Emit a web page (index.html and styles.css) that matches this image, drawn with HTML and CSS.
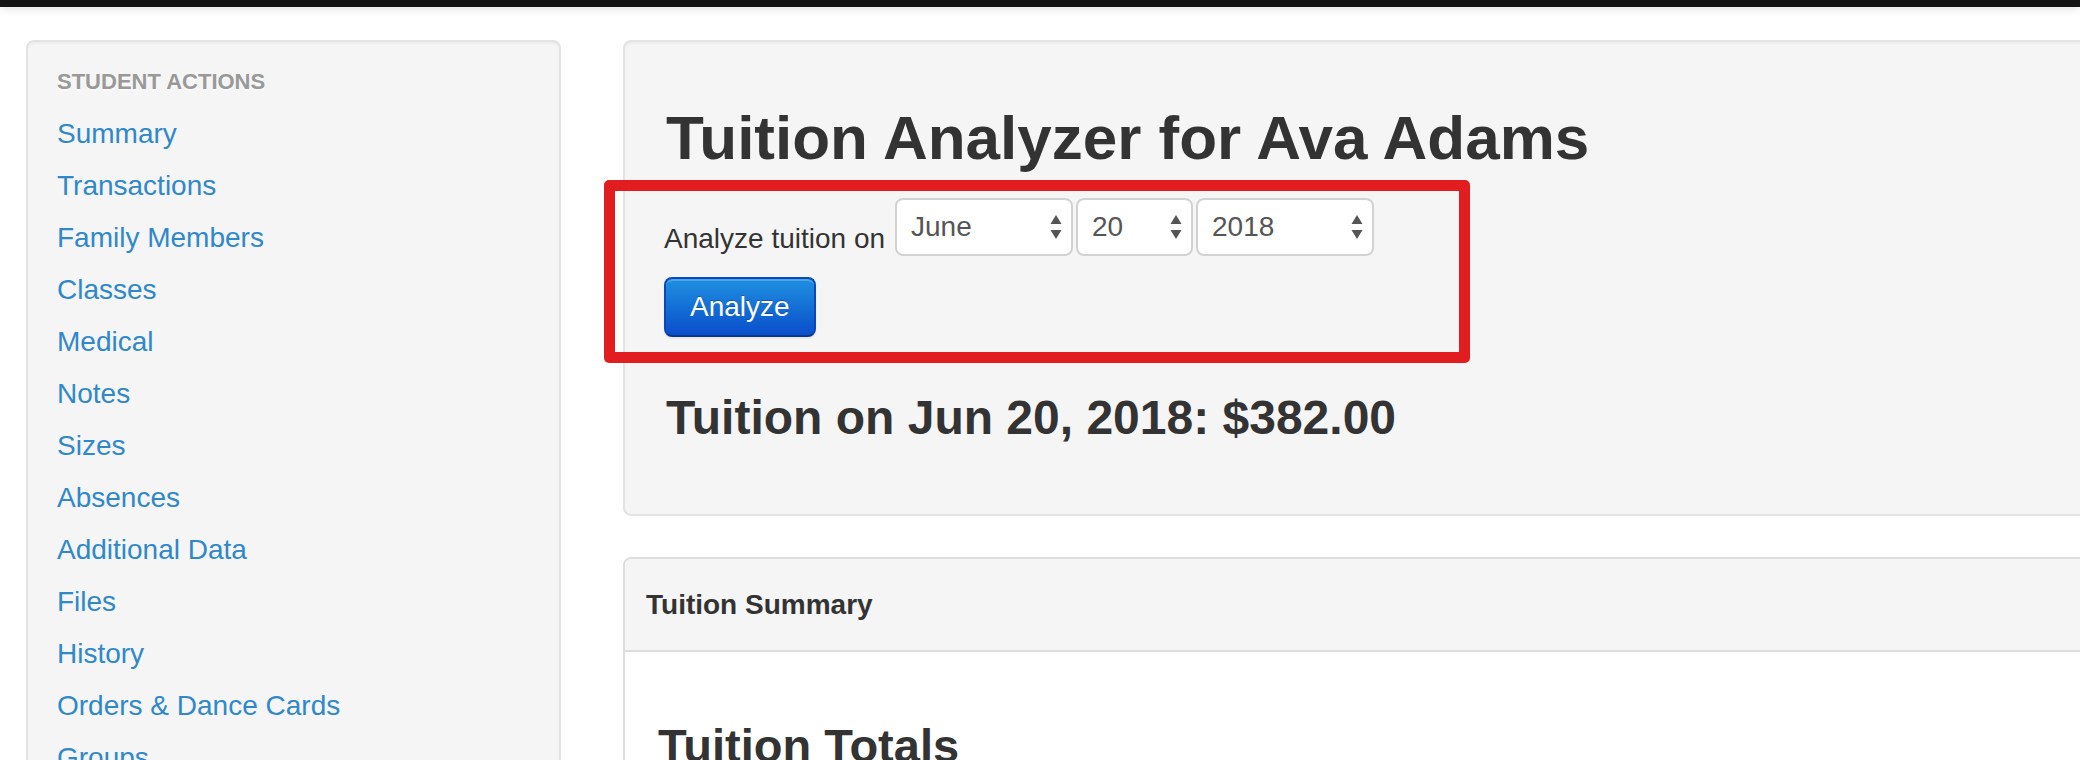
FILE: index.html
```html
<!DOCTYPE html>
<html lang="en">
<head>
<meta charset="utf-8">
<title>Tuition Analyzer for Ava Adams</title>
<link rel="stylesheet" href="styles.css">
</head>
<body>
<div class="topbar"></div>
<div class="page">
  <aside class="sidebar">
    <div class="nav-header">Student Actions</div>
    <ul class="nav-list">
      <li><a href="#">Summary</a></li>
      <li><a href="#">Transactions</a></li>
      <li><a href="#">Family Members</a></li>
      <li><a href="#">Classes</a></li>
      <li><a href="#">Medical</a></li>
      <li><a href="#">Notes</a></li>
      <li><a href="#">Sizes</a></li>
      <li><a href="#">Absences</a></li>
      <li><a href="#">Additional Data</a></li>
      <li><a href="#">Files</a></li>
      <li><a href="#">History</a></li>
      <li><a href="#">Orders &amp; Dance Cards</a></li>
      <li><a href="#">Groups</a></li>
    </ul>
  </aside>
  <main class="main">
    <section class="hero">
      <h2 class="title">Tuition Analyzer for Ava Adams</h2>
      <div class="form-row">
        <span class="label">Analyze tuition on</span>
        <div class="select sel-month"><span>June</span><svg class="arrows" width="12" height="24" viewBox="0 0 12 24"><path d="M6 0 L11.5 9 L0.5 9 Z M6 24 L11.5 15 L0.5 15 Z" fill="#555"/></svg></div>
        <div class="select sel-day"><span>20</span><svg class="arrows" width="12" height="24" viewBox="0 0 12 24"><path d="M6 0 L11.5 9 L0.5 9 Z M6 24 L11.5 15 L0.5 15 Z" fill="#555"/></svg></div>
        <div class="select sel-year"><span>2018</span><svg class="arrows" width="12" height="24" viewBox="0 0 12 24"><path d="M6 0 L11.5 9 L0.5 9 Z M6 24 L11.5 15 L0.5 15 Z" fill="#555"/></svg></div>
      </div>
      <button class="btn-primary" type="button">Analyze</button>
      <h3 class="result">Tuition on Jun 20, 2018: $382.00</h3>
      <div class="annotation"></div>
    </section>
    <section class="panel">
      <div class="panel-heading">Tuition Summary</div>
      <div class="panel-body">
        <h3 class="totals">Tuition Totals</h3>
      </div>
    </section>
  </main>
</div>
</body>
</html>
```
FILE: styles.css
```css
html, body {
  margin: 0;
  padding: 0;
  background: #ffffff;
  overflow: hidden;
  height: 760px;
}
body {
  font-family: "Liberation Sans", Arial, Helvetica, sans-serif;
  color: #333333;
}
.topbar {
  height: 7px;
  background: #141414;
  box-shadow: 0 2px 8px rgba(0, 0, 0, 0.12);
}
.page {
  display: flex;
  align-items: flex-start;
  gap: 62px;
  padding: 33px 0 0 26px;
}
.sidebar {
  flex: none;
  box-sizing: border-box;
  width: 535px;
  background: #f5f5f5;
  border: 2px solid #e3e3e3;
  border-radius: 8px;
  box-shadow: inset 0 2px 2px rgba(0, 0, 0, 0.04);
  padding: 14px 29px 40px;
}
.nav-header {
  font-size: 22px;
  line-height: 52px;
  font-weight: bold;
  text-transform: uppercase;
  color: #999999;
  text-shadow: 0 2px 0 rgba(255, 255, 255, 0.5);
}
.nav-list {
  list-style: none;
  margin: 0;
  padding: 0;
}
.nav-list a {
  display: block;
  font-size: 28px;
  line-height: 52px;
  color: #3088c9;
  text-decoration: none;
}
.main {
  flex: none;
  width: 1600px;
  display: flex;
  flex-direction: column;
  gap: 41px;
}
.hero {
  position: relative;
  background: #f5f5f5;
  border: 2px solid #e3e3e3;
  border-radius: 8px;
  box-shadow: inset 0 2px 2px rgba(0, 0, 0, 0.04);
  padding: 56px 39px 66px;
}
.title {
  margin: 0;
  font-size: 62px;
  line-height: 80px;
  font-weight: bold;
  color: #333333;
  padding-left: 2px;
}
.form-row {
  display: flex;
  align-items: flex-start;
  height: 58px;
  margin-top: 20px;
}
.label {
  font-size: 28px;
  line-height: 36px;
  margin-top: 23px;
  margin-right: 10px;
  color: #333333;
}
.select {
  box-sizing: border-box;
  height: 58px;
  background: #ffffff;
  border: 2px solid #d2d2d2;
  border-radius: 8px;
  display: flex;
  align-items: center;
  justify-content: space-between;
  padding: 0 9px 0 14px;
  font-size: 28px;
  color: #555555;
  margin-right: 3px;
}
.sel-month { width: 178px; }
.sel-day { width: 117px; }
.sel-year { width: 178px; }
.arrows {
  display: block;
}
.btn-primary {
  display: block;
  box-sizing: border-box;
  margin-top: 21px;
  height: 60px;
  padding: 0 24px;
  font-family: inherit;
  font-size: 28px;
  color: #ffffff;
  text-shadow: 0 -1px 0 rgba(0, 0, 0, 0.25);
  background: linear-gradient(to bottom, #1f90e0, #0a4ecb);
  border: 2px solid #0b49b8;
  border-bottom-color: #07368c;
  border-radius: 8px;
  box-shadow: inset 0 2px 0 rgba(255, 255, 255, 0.2), 0 2px 2px rgba(0, 0, 0, 0.05);
}
.result {
  margin: 51px 0 0;
  font-size: 48px;
  line-height: 60px;
  font-weight: bold;
  color: #333333;
  padding-left: 2px;
}
.annotation {
  position: absolute;
  left: -21px;
  top: 138px;
  width: 866px;
  height: 183px;
  box-sizing: border-box;
  border: 11px solid #e11d1f;
  border-radius: 5px;
}
.panel {
  border: 2px solid #dddddd;
  border-radius: 8px;
  background: #ffffff;
  overflow: hidden;
}
.panel-heading {
  background: #f5f5f5;
  border-bottom: 2px solid #dddddd;
  padding: 26px 21px 25px;
  font-size: 28px;
  line-height: 40px;
  font-weight: bold;
  color: #333333;
}
.panel-body {
  padding: 64px 31px 40px 33px;
}
.totals {
  margin: 0;
  font-size: 47px;
  line-height: 60px;
  font-weight: bold;
  color: #333333;
}
```
